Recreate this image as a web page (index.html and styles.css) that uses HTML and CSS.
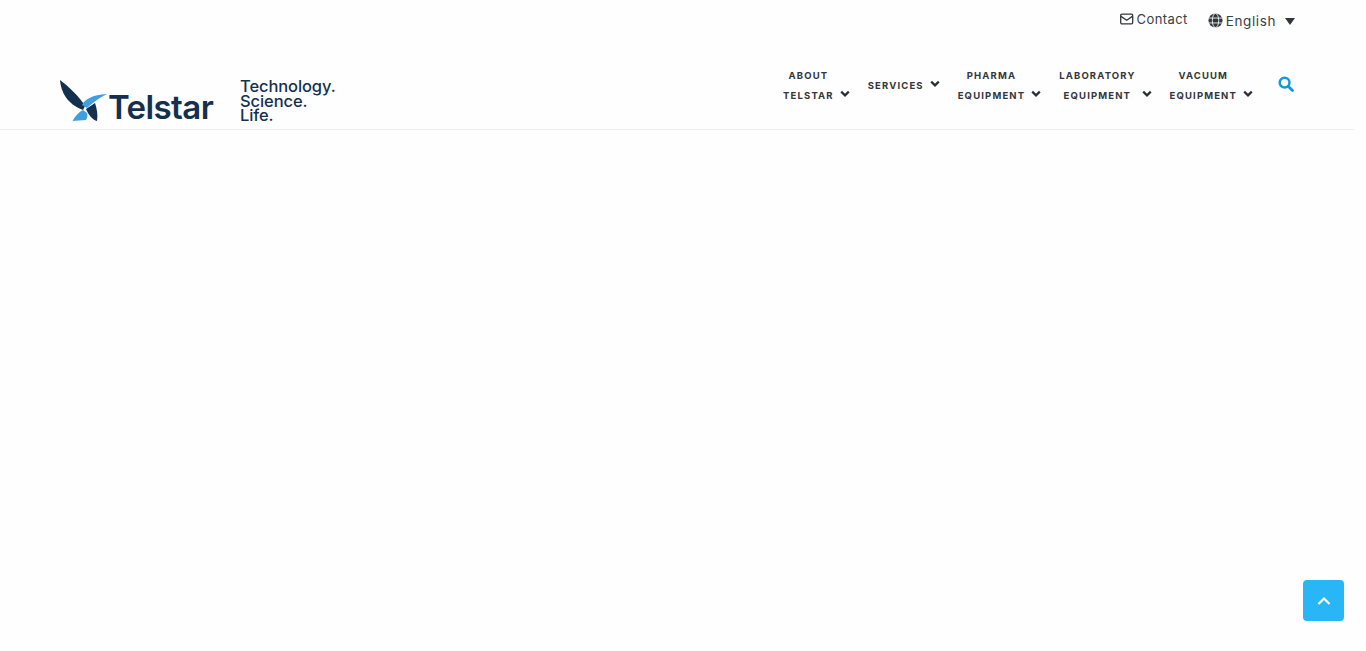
FILE: index.html
```html
<!DOCTYPE html>
<html lang="en">
<head>
<meta charset="utf-8">
<title>Telstar</title>
<link rel="stylesheet" href="styles.css">
</head>
<body>
<header class="site-header">
  <div class="topbar">
    <a class="top-link contact">
      <svg class="mail-icon" viewBox="0 0 14 12" width="14" height="12"><rect x="0.7" y="1.2" width="12" height="9.6" rx="1.2" fill="none" stroke="#33363b" stroke-width="1.3"/><path d="M1 3.4 6.7 7.2 12.4 3.4" fill="none" stroke="#33363b" stroke-width="1.3"/></svg>
      Contact
    </a>
    <a class="top-link lang">
      <svg class="globe-icon" viewBox="0 0 16 16" width="15" height="15"><circle cx="8" cy="8" r="7.5" fill="#33363b"/><g fill="none" stroke="#fff" stroke-width="0.9"><ellipse cx="8" cy="8" rx="3.4" ry="7.5"/><path d="M0.5 5.4H15.5M0.5 10.6H15.5"/></g></svg>
      <span class="lang-name">English</span>
      <span class="caret"></span>
    </a>
  </div>
  <div class="mainbar">
    <a class="logo">
      <svg class="logo-mark" viewBox="0 0 50 42" width="50" height="42">
        <path d="M1 0C2 12 8 24 24 30L26 26C20 16 10 7 1 0Z" fill="#14304f"/>
        <path d="M23 25C26 19 33 15 48 14C40 18 35 22 28 28Z" fill="#3f9fe2"/>
        <path d="M13.5 41C16 36 20 32 24 30L28 33C29 36 28 38 27 40Z" fill="#3f9fe2"/>
        <path d="M27 29 36 23C38 29 39 35 38 41C34 40 30 36 27 29Z" fill="#14304f"/>
      </svg>
      <span class="logo-name">Telstar</span>
      <span class="logo-tag">Technology.<br>Science.<br>Life.</span>
    </a>
    <nav class="nav">
      <a class="nav-item"><span class="nav-text">ABOUT<br>TELSTAR</span><svg class="chev" viewBox="0 0 10 8" width="10" height="8"><path d="M1.2 1.6 5 5.4 8.8 1.6" fill="none" stroke="#2b2e33" stroke-width="2.2"/></svg></a>
      <a class="nav-item single"><span class="nav-text">SERVICES</span><svg class="chev" viewBox="0 0 10 8" width="10" height="8"><path d="M1.2 1.6 5 5.4 8.8 1.6" fill="none" stroke="#2b2e33" stroke-width="2.2"/></svg></a>
      <a class="nav-item"><span class="nav-text">PHARMA<br>EQUIPMENT</span><svg class="chev" viewBox="0 0 10 8" width="10" height="8"><path d="M1.2 1.6 5 5.4 8.8 1.6" fill="none" stroke="#2b2e33" stroke-width="2.2"/></svg></a>
      <a class="nav-item"><span class="nav-text">LABORATORY<br>EQUIPMENT</span><svg class="chev" viewBox="0 0 10 8" width="10" height="8"><path d="M1.2 1.6 5 5.4 8.8 1.6" fill="none" stroke="#2b2e33" stroke-width="2.2"/></svg></a>
      <a class="nav-item"><span class="nav-text">VACUUM<br>EQUIPMENT</span><svg class="chev" viewBox="0 0 10 8" width="10" height="8"><path d="M1.2 1.6 5 5.4 8.8 1.6" fill="none" stroke="#2b2e33" stroke-width="2.2"/></svg></a>
      <svg class="search" viewBox="0 0 17 17" width="16" height="16"><circle cx="7" cy="7" r="5.2" fill="none" stroke="#0e9bdc" stroke-width="2.6"/><path d="M10.8 10.8 15.4 15.4" stroke="#0e9bdc" stroke-width="3" stroke-linecap="round"/></svg>
    </nav>
  </div>
</header>
<a class="to-top"><svg viewBox="0 0 14 10" width="14" height="10"><path d="M1.5 8 7 2.5 12.5 8" fill="none" stroke="#fff" stroke-width="2.2"/></svg></a>
</body>
</html>
```
FILE: styles.css
```css
* { box-sizing: border-box; }
html, body { margin: 0; height: 100%; background: #fefefe; overflow: hidden; }
body { font-family: "Inter", "Liberation Sans", sans-serif; color: #3c3f44; }
.site-header { width: 1354px; height: 130px; border-bottom: 1px solid #ececec; display: flex; flex-direction: column; }
.topbar { display: flex; justify-content: flex-end; align-items: center; gap: 20px; height: 40px; padding-right: 59px; font-size: 13px; }
.top-link { display: flex; align-items: center; gap: 3px; }
.contact { position: relative; top: -1px; letter-spacing: 0.42px; }
.lang { font-size: 13.5px; letter-spacing: 0.6px; position: relative; top: 1px; }
.lang .globe-icon { position: relative; top: -1px; }
.caret { width: 0; height: 0; margin-left: 6px; border-left: 5px solid transparent; border-right: 5px solid transparent; border-top: 7px solid #33363b; }
.mainbar { display: flex; justify-content: space-between; align-items: flex-start; flex: 1; padding: 26px 60px 0 59px; }
.logo { display: flex; align-items: flex-start; padding-top: 14px; color: #14304f; }
.logo-mark { flex: none; }
.logo-name { font-size: 33px; font-weight: 600; letter-spacing: -0.6px; margin-left: -1px; line-height: 1; margin-top: 11px; width: 132px; }
.logo-tag { font-size: 16.5px; font-weight: 500; line-height: 14.5px; letter-spacing: -0.1px; margin-top: -1px; }
.nav { display: flex; align-items: flex-start; gap: 17px; }
.nav-item { display: flex; align-items: flex-end; font-size: 9.5px; font-weight: 700; letter-spacing: 1.15px; color: #33363b; }
.nav-text { text-align: center; line-height: 20px; }
.nav-item .chev { margin-left: 6px; margin-right: 1px; margin-bottom: 8px; }
.nav-item.single { margin-top: 10px; }
.search { margin-left: 7px; margin-top: 10px; }
.to-top { position: fixed; left: 1303px; top: 580px; width: 41px; height: 41px; border-radius: 4px; background: #29b6f6; display: flex; align-items: center; justify-content: center; }
```
